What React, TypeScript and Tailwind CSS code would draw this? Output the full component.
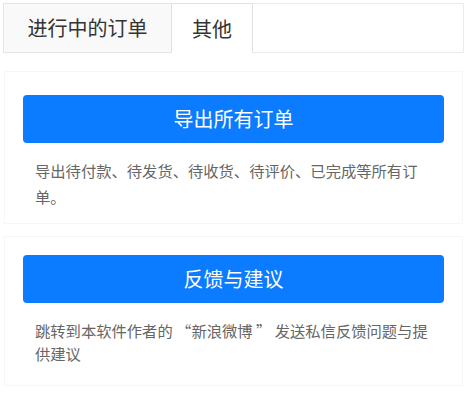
import React from "react";

export default function App() {
  return (
    <div
      className="w-[467px] h-[396px] bg-white overflow-hidden relative"
      style={{ fontFamily: '"Noto Sans CJK SC", "Noto Sans", sans-serif' }}
    >
      <div className="flex h-[53px] pl-[3px] pt-[3px]">
        <div className="w-[168px] flex items-center justify-center bg-[#f9f9f9] border-b border-l border-t border-[#e6e6e6] text-[20px] text-[#333]">
          进行中的订单
        </div>
        <div className="w-[82px] flex items-center justify-center bg-white border-l border-r border-t border-[#e0e0e0] text-[20px] text-[#333]">
          其他
        </div>
        <div className="flex-1 border-b border-t border-r border-[#ececec] bg-white mr-[3px]" />
      </div>

      <div className="mx-[4px] mt-[18px] border border-[#f7f7f7] pt-[23px] pb-[14px]">
        <div className="mx-[18px] h-[48px] rounded-[4px] bg-[#0b7bff] flex items-center justify-center text-white text-[20px]">
          导出所有订单
        </div>
        <p className="ml-[30px] mt-[14px] w-[402px] text-[15.3px] leading-[26px] text-[#666]">
          导出待付款、待发货、待收货、待评价、已完成等所有订单。
        </p>
      </div>

      <div className="mx-[4px] mt-[12px] border border-[#f7f7f7] pt-[18px] pb-[20px]">
        <div className="mx-[18px] h-[48px] rounded-[4px] bg-[#0b7bff] flex items-center justify-center text-white text-[20px]">
          反馈与建议
        </div>
        <p className="ml-[30px] mt-[16px] w-[402px] text-[15.3px] leading-[23px] text-[#666]">
          跳转到本软件作者的 “新浪微博 ” 发送私信反馈问题与提供建议
        </p>
      </div>
    </div>
  );
}
